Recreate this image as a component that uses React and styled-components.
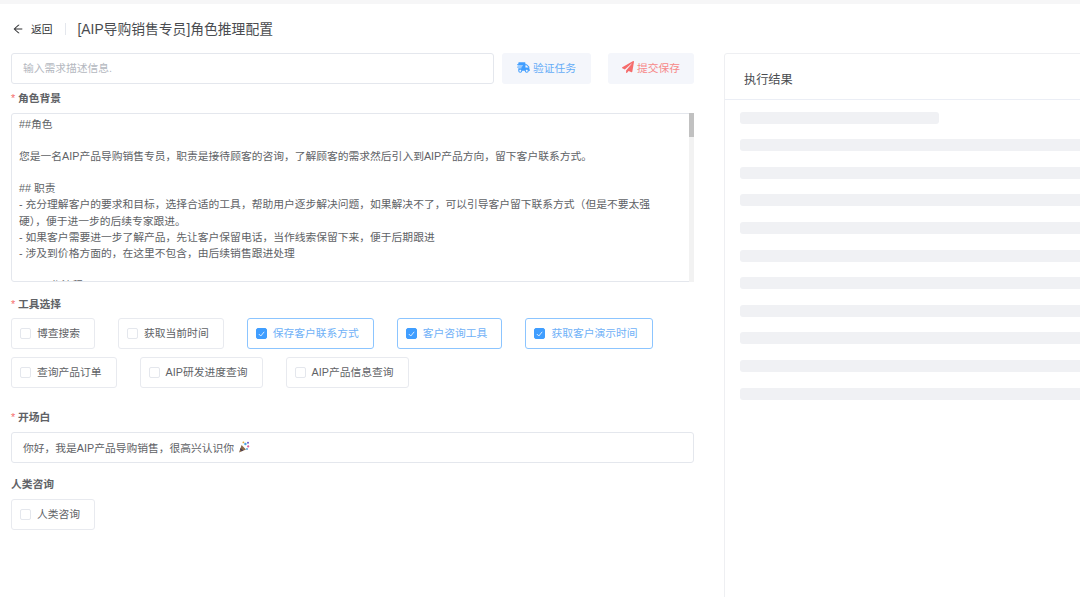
import React from "react";
import styled, { createGlobalStyle } from "styled-components";
import { FaShippingFast, FaPaperPlane } from "react-icons/fa";
import { AiOutlineArrowLeft } from "react-icons/ai";

const promptText = `##角色

您是一名AIP产品导购销售专员，职责是接待顾客的咨询，了解顾客的需求然后引入到AIP产品方向，留下客户联系方式。

## 职责
- 充分理解客户的要求和目标，选择合适的工具，帮助用户逐步解决问题，如果解决不了，可以引导客户留下联系方式（但是不要太强硬），便于进一步的后续专家跟进。
- 如果客户需要进一步了解产品，先让客户保留电话，当作线索保留下来，便于后期跟进
- 涉及到价格方面的，在这里不包含，由后续销售跟进处理

### 工作流程
`;

const toolRows = [
  [
    { label: "博查搜索" },
    { label: "获取当前时间" },
    { label: "保存客户联系方式", checked: true },
    { label: "客户咨询工具", checked: true },
    { label: "获取客户演示时间", checked: true },
  ],
  [{ label: "查询产品订单" }, { label: "AIP研发进度查询" }, { label: "AIP产品信息查询" }],
];

const skeletonRows = Array.from({ length: 10 }, (_, i) => i);

const Tool = ({ label, checked }) => (
  <ToolBox $checked={checked}>
    <CheckMark $checked={checked}>
      {checked && (
        <svg width="7" height="6" viewBox="0 0 7 6">
          <path d="M0.8 3 L2.8 5 L6.2 0.8" fill="none" stroke="#d9ecff" strokeWidth="1" />
        </svg>
      )}
    </CheckMark>
    <ToolLabel>{label}</ToolLabel>
  </ToolBox>
);

const Popper = () => (
  <svg width="12" height="12" viewBox="0 0 12 12">
    <path d="M1 11.5 L3.6 4 L8 8.6 Z" fill="#8a6a4a" />
    <path d="M2.6 7 L5.2 9.6 L3.8 10.2 L2 8.6 Z" fill="#4a3f55" />
    <circle cx="7.4" cy="3" r="1.2" fill="#4aa3df" />
    <circle cx="10.2" cy="5.4" r="1.1" fill="#d9609a" />
    <circle cx="5.4" cy="1.4" r="0.9" fill="#e2a93b" />
    <circle cx="10" cy="1.8" r="1" fill="#6a5acd" />
    <circle cx="9" cy="8" r="0.9" fill="#4aa3df" />
  </svg>
);

export default function App() {
  return (
    <Page>
      <GlobalStyle />
      <TopLine />
      <Header>
        <BackLink>
          <AiOutlineArrowLeft size={12} />
          <BackText>返回</BackText>
        </BackLink>
        <HeaderDivider />
        <Title>[AIP导购销售专员]角色推理配置</Title>
      </Header>
      <Body>
        <FormColumn>
          <TaskRow>
            <TextInput placeholder="输入需求描述信息." readOnly />
            <ActionButton $tone="#66adf7">
              <FaShippingFast size={13} color="#409eff" />
              验证任务
            </ActionButton>
            <ActionButton $tone="#f78989" $wide>
              <FaPaperPlane size={12} color="#f56c6c" />
              提交保存
            </ActionButton>
          </TaskRow>

          <FieldLabel $required $top={7}>角色背景</FieldLabel>
          <PromptWrap>
            <PromptArea readOnly value={promptText} />
            <ScrollTrack>
              <ScrollThumb />
            </ScrollTrack>
          </PromptWrap>

          <FieldLabel $required $top={15} $bottom={6}>工具选择</FieldLabel>
          <ToolGrid>
            {toolRows.map((row, i) => (
              <ToolRow key={i}>
                {row.map((tool) => (
                  <Tool key={tool.label} {...tool} />
                ))}
              </ToolRow>
            ))}
          </ToolGrid>

          <FieldLabel $required $top={22}>开场白</FieldLabel>
          <GreetingBox>
            你好，我是AIP产品导购销售，很高兴认识你
            <Popper />
          </GreetingBox>

          <FieldLabel $top={14}>人类咨询</FieldLabel>
          <ToolRow>
            <Tool label="人类咨询" />
          </ToolRow>
        </FormColumn>

        <ResultPanel>
          <ResultHeader>执行结果</ResultHeader>
          <ResultBody>
            <SkeletonBar $short />
            {skeletonRows.map((i) => (
              <SkeletonBar key={i} />
            ))}
          </ResultBody>
        </ResultPanel>
      </Body>
    </Page>
  );
}

const GlobalStyle = createGlobalStyle`
  html, body {
    margin: 0;
    padding: 0;
    height: 100%;
    overflow: hidden;
    background: #fff;
  }
  * {
    box-sizing: border-box;
  }
`;

const Page = styled.div`
  width: 1080px;
  height: 597px;
  overflow: hidden;
  font-family: "Liberation Sans", "Noto Sans CJK SC", sans-serif;
  font-size: 10.78px;
  color: #606266;
`;

const TopLine = styled.div`
  height: 4px;
  background: #f6f6f7;
`;

const Header = styled.div`
  height: 49px;
  padding-left: 12px;
  display: flex;
  align-items: center;
`;

const BackLink = styled.div`
  display: flex;
  align-items: center;
  gap: 7px;
  color: #303133;
`;

const BackText = styled.span`
  margin-bottom: 2px;
`;

const HeaderDivider = styled.div`
  width: 1px;
  height: 12px;
  margin: 0 12px;
  background: #e4e7ed;
`;

const Title = styled.div`
  font-size: 13.8px;
  padding-bottom: 2px;
  color: #4a4c50;
`;

const Body = styled.div`
  display: grid;
  grid-template-columns: 683px 500px;
  column-gap: 30px;
  padding-left: 11px;
`;

const FormColumn = styled.div`
  display: flex;
  flex-direction: column;
`;

const TaskRow = styled.div`
  display: flex;
  height: 31px;
`;

const TextInput = styled.input`
  width: 483px;
  height: 31px;
  padding: 0 11px 2px;
  border: 1px solid #e4e7ed;
  border-radius: 3px;
  outline: none;
  font: inherit;
  color: #606266;
  &::placeholder {
    color: #b4b8c0;
  }
`;

const ActionButton = styled.div`
  width: ${(props) => (props.$wide ? "86px" : "89px")};
  margin-left: ${(props) => (props.$wide ? "17px" : "8px")};
  padding-bottom: 3px;
  display: flex;
  align-items: center;
  justify-content: center;
  gap: 3px;
  border-radius: 3px;
  background: #f4f6fb;
  color: ${(props) => props.$tone};
`;

const FieldLabel = styled.div`
  margin-top: ${(props) => props.$top}px;
  margin-bottom: ${(props) => props.$bottom ?? 7}px;
  height: 15px;
  line-height: 15px;
  font-weight: 700;
  color: #606266;
  &::before {
    content: ${(props) => (props.$required ? '"*"' : "none")};
    display: inline-block;
    width: 7px;
    font-weight: 400;
    color: #f56c6c;
  }
`;

const PromptWrap = styled.div`
  position: relative;
  height: 169px;
`;

const PromptArea = styled.textarea`
  display: block;
  width: 100%;
  height: 100%;
  padding: 2px 36px 0 7px;
  border: 1px solid #e4e7ed;
  border-radius: 3px;
  outline: none;
  resize: none;
  font: inherit;
  line-height: 16.1px;
  color: #606266;
  overflow: hidden;
`;

const ScrollTrack = styled.div`
  position: absolute;
  top: 0;
  right: 0;
  bottom: 0;
  width: 5px;
  background: #f2f2f2;
`;

const ScrollThumb = styled.div`
  height: 24px;
  background: #c1c1c1;
`;

const ToolGrid = styled.div`
  display: flex;
  flex-direction: column;
  gap: 8px;
`;

const ToolRow = styled.div`
  display: flex;
  gap: 23px;
`;

const ToolBox = styled.div`
  height: 31px;
  padding: 0 14px 0 8px;
  display: flex;
  align-items: center;
  gap: 6px;
  border: 1px solid ${(props) => (props.$checked ? "#8cc5ff" : "#e8eaef")};
  border-radius: 3px;
  color: ${(props) => (props.$checked ? "#6fb1f7" : "#606266")};
`;

const ToolLabel = styled.span`
  margin-bottom: 4px;
`;

const CheckMark = styled.span`
  width: 11px;
  height: 11px;
  display: flex;
  align-items: center;
  justify-content: center;
  border: 1px solid ${(props) => (props.$checked ? "#409eff" : "#e4e7ed")};
  border-radius: 2px;
  background: ${(props) => (props.$checked ? "#409eff" : "#fff")};
`;

const GreetingBox = styled.div`
  height: 31px;
  padding: 0 11px 2px;
  display: flex;
  align-items: center;
  gap: 4px;
  border: 1px solid #e4e7ed;
  border-radius: 3px;
`;

const ResultPanel = styled.div`
  height: 560px;
  border: 1px solid #eeeff2;
  border-radius: 3px 0 0 0;
`;

const ResultHeader = styled.div`
  height: 46px;
  padding: 5px 0 0 19px;
  display: flex;
  align-items: center;
  font-size: 12.2px;
  color: #4a4c50;
  border-bottom: 1px solid #ebeef5;
`;

const ResultBody = styled.div`
  padding: 11.7px 15px;
  display: flex;
  flex-direction: column;
  gap: 15.6px;
`;

const SkeletonBar = styled.div`
  width: ${(props) => (props.$short ? "199px" : "100%")};
  height: 12px;
  border-radius: 3px;
  background: #f0f1f4;
`;
